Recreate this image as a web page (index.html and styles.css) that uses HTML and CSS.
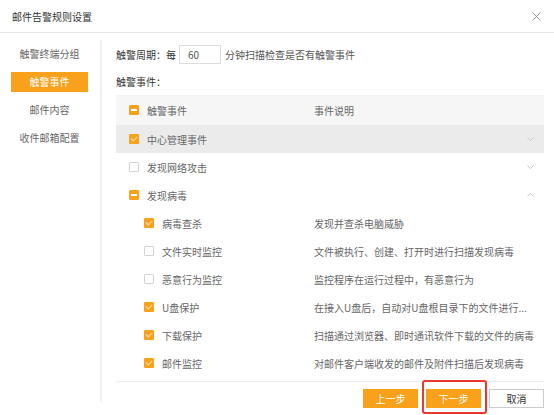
FILE: index.html
```html
<!DOCTYPE html>
<html lang="zh-CN">
<head>
  <meta charset="UTF-8">
  <title>邮件告警规则设置</title>
  <link rel="stylesheet" href="styles.css">
</head>
<body>

  <div class="dialog">
    <!-- Header -->
    <div class="dialog-header">
      <span class="dialog-title">邮件告警规则设置</span>
      <svg class="close" width="9" height="9" viewBox="0 0 9 9">
        <path d="M0.5 0.5 L8.5 8.5 M8.5 0.5 L0.5 8.5" stroke="#9a9a9a" stroke-width="1" fill="none"/>
      </svg>
    </div>

    <div class="dialog-body">
      <!-- Side menu -->
      <div class="side">
        <div class="side-item">触警终端分组</div>
        <div class="side-item active">触警事件</div>
        <div class="side-item">邮件内容</div>
        <div class="side-item">收件邮箱配置</div>
      </div>

      <!-- Main content -->
      <div class="main">
        <div class="period">
          <span class="label">触警周期：每</span>
          <input class="period-input" type="text" value="60">
          <span>分钟扫描检查是否有触警事件</span>
        </div>

        <div class="section-label">触警事件：</div>

        <div class="event-table">
          <div class="row head">
            <div class="cell-name"><span class="check half"></span>触警事件</div>
            <div class="cell-desc">事件说明</div>
          </div>

          <div class="row hover">
            <div class="cell-name"><span class="check on"></span>中心管理事件</div>
            <div class="cell-desc"></div>
            <svg class="arrow" width="7" height="4" viewBox="0 0 7 4"><path d="M0.5 0.5 L3.5 3.5 L6.5 0.5" stroke="#c8c8c8" fill="none"/></svg>
          </div>
          <div class="row">
            <div class="cell-name"><span class="check"></span>发现网络攻击</div>
            <div class="cell-desc"></div>
            <svg class="arrow" width="7" height="4" viewBox="0 0 7 4"><path d="M0.5 0.5 L3.5 3.5 L6.5 0.5" stroke="#c8c8c8" fill="none"/></svg>
          </div>
          <div class="row">
            <div class="cell-name"><span class="check half"></span>发现病毒</div>
            <div class="cell-desc"></div>
            <svg class="arrow" width="7" height="4" viewBox="0 0 7 4"><path d="M0.5 3.5 L3.5 0.5 L6.5 3.5" stroke="#c8c8c8" fill="none"/></svg>
          </div>

          <div class="row child">
            <div class="cell-name"><span class="check on"></span>病毒查杀</div>
            <div class="cell-desc">发现并查杀电脑威胁</div>
          </div>
          <div class="row child">
            <div class="cell-name"><span class="check"></span>文件实时监控</div>
            <div class="cell-desc">文件被执行、创建、打开时进行扫描发现病毒</div>
          </div>
          <div class="row child">
            <div class="cell-name"><span class="check"></span>恶意行为监控</div>
            <div class="cell-desc">监控程序在运行过程中，有恶意行为</div>
          </div>
          <div class="row child">
            <div class="cell-name"><span class="check on"></span>U盘保护</div>
            <div class="cell-desc">在接入U盘后，自动对U盘根目录下的文件进行...</div>
          </div>
          <div class="row child">
            <div class="cell-name"><span class="check on"></span>下载保护</div>
            <div class="cell-desc">扫描通过浏览器、即时通讯软件下载的文件的病毒</div>
          </div>
          <div class="row child">
            <div class="cell-name"><span class="check on"></span>邮件监控</div>
            <div class="cell-desc">对邮件客户端收发的邮件及附件扫描后发现病毒</div>
          </div>
        </div>

        <!-- Footer buttons -->
        <div class="footer">
          <a href="#" class="btn primary">上一步</a>
          <span class="highlight">
            <a href="#" class="btn primary">下一步</a>
          </span>
          <a href="#" class="btn">取消</a>
        </div>
      </div>
    </div>
  </div>

</body>
</html>
```

FILE: styles.css
```css
/* Basic Styles */
body {
  margin: 0;
  padding: 0;
  background-color: #fff;
  font-family: "Noto Sans CJK SC", "Noto Sans", sans-serif;
  font-size: 10px;
  color: #666;
}

.dialog {
  width: 554px;
  height: 415px;
  overflow: hidden;
}

/* Header */
.dialog-header {
  height: 32px;
  border-bottom: 1px solid #e8e8e8;
  display: flex;
  align-items: center;
  justify-content: space-between;
  padding: 0 13px 0 12px;
}

.dialog-title {
  color: #333;
  font-size: 10px;
}

.dialog-body {
  display: flex;
}

/* Side menu */
.side {
  width: 100px;
  height: 357px;
  margin-top: 7px;
  padding-top: 4px;
  border-right: 2px solid #efefef;
  flex-shrink: 0;
}

.side-item {
  height: 20px;
  line-height: 20px;
  margin: 0 12px 8px 11px;
  text-align: center;
  color: #666;
}

.side-item.active {
  background-color: #f9a11b;
  color: #fff;
}

/* Main */
.main {
  flex: 1;
  padding: 12px 13px 0 14px;
}

.period {
  display: flex;
  align-items: center;
  height: 19px;
  color: #555;
}

.period .label {
  color: #333;
}

.period-input {
  width: 42px;
  height: 19px;
  box-sizing: border-box;
  border: 1px solid #ddd;
  margin: 0 4px 0 3px;
  padding: 0 0 0 8px;
  font-family: inherit;
  font-size: 10px;
  color: #555;
  outline: none;
}

.section-label {
  margin-top: 11px;
  height: 14px;
  line-height: 14px;
  color: #333;
}

/* Event table */
.event-table {
  margin-top: 6px;
}

.row {
  display: flex;
  align-items: center;
  height: 28px;
  padding: 0 10px 0 13px;
}

.row.head {
  height: 30px;
  background-color: #f6f6f6;
}

.row.hover {
  background-color: #ebebeb;
}

.row.child {
  padding-left: 28px;
}

.cell-name {
  display: flex;
  align-items: center;
  width: 185px;
  flex-shrink: 0;
}

.row.child .cell-name {
  width: 170px;
}

.cell-desc {
  flex: 1;
  white-space: nowrap;
  overflow: hidden;
}

.arrow {
  display: block;
}

/* Checkboxes */
.check {
  display: inline-block;
  position: relative;
  width: 10px;
  height: 10px;
  box-sizing: border-box;
  border: 1px solid #d4d4d4;
  background-color: #fff;
  margin-right: 8px;
  border-radius: 1px;
}

.check.on,
.check.half {
  border-color: #f9a11b;
  background-color: #f9a11b;
}

.check.on::after {
  content: "";
  position: absolute;
  left: 2px;
  top: 0px;
  width: 3px;
  height: 5px;
  border: solid #fde0b4;
  border-width: 0 1px 1px 0;
  transform: rotate(45deg);
}

.check.half::after {
  content: "";
  position: absolute;
  left: 1px;
  top: 3px;
  width: 6px;
  height: 2px;
  background-color: #fff;
}

/* Footer */
.footer {
  margin-top: 4px;
  border-top: 1px solid #ececec;
  padding-top: 7px;
  display: flex;
  justify-content: flex-end;
  gap: 8px;
}

.btn {
  display: inline-block;
  width: 55px;
  height: 19px;
  line-height: 17px;
  box-sizing: border-box;
  border: 1px solid #ccc;
  text-align: center;
  text-decoration: none;
  color: #333;
  font-size: 10px;
  background-color: #fff;
}

.btn.primary {
  border-color: #f9a11b;
  background-color: #f9a11b;
  color: #fff;
}

.highlight {
  position: relative;
  display: inline-block;
  height: 19px;
}

.highlight::before {
  content: "";
  position: absolute;
  left: -4px;
  right: -6px;
  top: -9px;
  bottom: -6px;
  border: 2px solid #e8382f;
  border-radius: 3px;
}
```
